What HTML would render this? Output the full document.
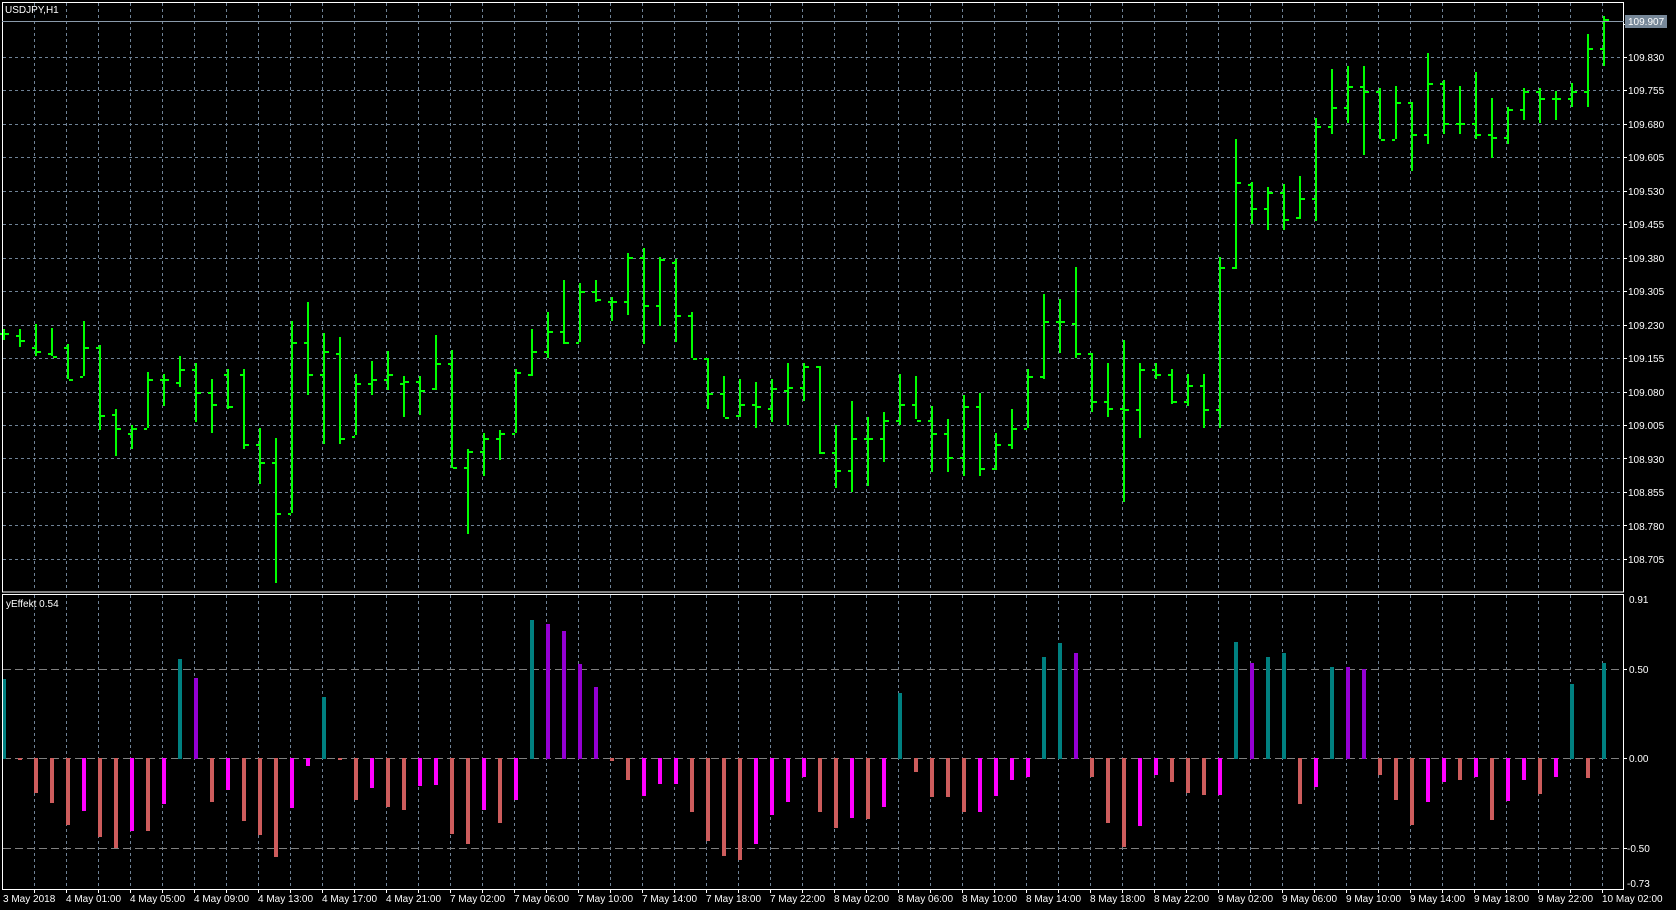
<!DOCTYPE html>
<html><head><meta charset="utf-8"><style>
html,body{margin:0;padding:0;background:#000;width:1676px;height:910px;overflow:hidden}
svg{display:block}
text{font-family:"Liberation Sans",sans-serif;font-size:10px;fill:#fff}
</style></head><body>
<svg id="s" width="1676" height="910" xmlns="http://www.w3.org/2000/svg">
<g id="grid"></g>
<g id="bars"></g>
<g id="ind"></g>
<rect x="2.5" y="2.5" width="1621" height="589.5" fill="none" stroke="#fff" stroke-width="1"/>
<rect x="2.5" y="594.5" width="1621" height="295" fill="none" stroke="#fff" stroke-width="1"/>
<line x1="2" y1="21.5" x2="1624" y2="21.5" stroke="#8a9aaa" stroke-width="1"/>
<rect x="1625" y="15" width="42" height="13" fill="#778899"/>
<text x="5" y="13">USDJPY,H1</text>
<text x="6" y="607">yEffekt 0.54</text>
<g id="plabels">
<text x="1628" y="25">109.907</text>
<text x="1628" y="61">109.830</text>
<text x="1628" y="94">109.755</text>
<text x="1628" y="128">109.680</text>
<text x="1628" y="161">109.605</text>
<text x="1628" y="195">109.530</text>
<text x="1628" y="228">109.455</text>
<text x="1628" y="262">109.380</text>
<text x="1628" y="295">109.305</text>
<text x="1628" y="329">109.230</text>
<text x="1628" y="362">109.155</text>
<text x="1628" y="396">109.080</text>
<text x="1628" y="429">109.005</text>
<text x="1628" y="463">108.930</text>
<text x="1628" y="496">108.855</text>
<text x="1628" y="530">108.780</text>
<text x="1628" y="563">108.705</text>
<text x="1629" y="603">0.91</text>
<text x="1629" y="673">0.50</text>
<text x="1629" y="762">0.00</text>
<text x="1627" y="852">-0.50</text>
<text x="1627" y="887">-0.73</text>
</g>
<g>
<text x="3" y="902">3 May 2018</text>
<text x="66" y="902">4 May 01:00</text>
<text x="130" y="902">4 May 05:00</text>
<text x="194" y="902">4 May 09:00</text>
<text x="258" y="902">4 May 13:00</text>
<text x="322" y="902">4 May 17:00</text>
<text x="386" y="902">4 May 21:00</text>
<text x="450" y="902">7 May 02:00</text>
<text x="514" y="902">7 May 06:00</text>
<text x="578" y="902">7 May 10:00</text>
<text x="642" y="902">7 May 14:00</text>
<text x="706" y="902">7 May 18:00</text>
<text x="770" y="902">7 May 22:00</text>
<text x="834" y="902">8 May 02:00</text>
<text x="898" y="902">8 May 06:00</text>
<text x="962" y="902">8 May 10:00</text>
<text x="1026" y="902">8 May 14:00</text>
<text x="1090" y="902">8 May 18:00</text>
<text x="1154" y="902">8 May 22:00</text>
<text x="1218" y="902">9 May 02:00</text>
<text x="1282" y="902">9 May 06:00</text>
<text x="1346" y="902">9 May 10:00</text>
<text x="1410" y="902">9 May 14:00</text>
<text x="1474" y="902">9 May 18:00</text>
<text x="1538" y="902">9 May 22:00</text>
<text x="1602" y="902">10 May 02:00</text>
</g>
</svg>
<script>
var NS="http://www.w3.org/2000/svg";
function el(p,t,a){var e=document.createElementNS(NS,t);for(var k in a)e.setAttribute(k,a[k]);p.appendChild(e);return e;}
var g=document.getElementById('grid');
for(var x=34;x<1623;x+=32){
 el(g,'line',{x1:x+.5,y1:3,x2:x+.5,y2:591,stroke:'#6f8296','stroke-dasharray':'3,3'});
 el(g,'line',{x1:x+.5,y1:595,x2:x+.5,y2:889,stroke:'#6f8296','stroke-dasharray':'3,3'});
 el(g,'line',{x1:x+.5,y1:889,x2:x+.5,y2:893,stroke:'#fff'});
}
for(var i=0;i<17;i++){var y=Math.round(57+(i-1)*33.45)+.5;
 if(i>0)el(g,'line',{x1:3,y1:y,x2:1623,y2:y,stroke:'#6f8296','stroke-dasharray':'3,3'});
 el(g,'line',{x1:1623,y1:y,x2:1627,y2:y,stroke:'#fff'});}
[669.5,758.5,848.5].forEach(function(y){el(g,'line',{x1:3,y1:y,x2:1623,y2:y,stroke:'#808080','stroke-dasharray':'8,4'});el(g,'line',{x1:1623,y1:y,x2:1627,y2:y,stroke:'#fff'});});
var d=[[308,318,312,312],[308,325,313,318],[303,333,325,328],[307,333,330,333],[322,355,325,355],[300,352,352,325],[323,402,325,388],[383,427,387,400],[398,420,405,400],[348,400,400,355],[350,380,355,355],[333,362,357,345],[340,395,345,367],[355,405,367,378],[345,383,350,380],[345,420,350,415],[400,453,415,432],[410,545,432,480],[300,480,480,320],[283,370,320,350],[312,415,350,328],[315,415,330,410],[350,407,408,358],[338,370,358,355],[328,365,355,350],[352,390,358,356],[352,388,356,365],[313,365,363,340],[327,438,340,437],[420,500,437,422],[405,445,422,410],[402,430,410,405],[345,405,405,348],[308,352,350,328],[292,335,328,310],[262,322,310,320],[265,320,320,272],[262,283,272,280],[278,300,282,282],[237,295,282,240],[232,322,240,285],[240,305,285,242],[242,320,245,295],[292,335,295,335],[335,383,335,368],[352,390,368,390],[355,390,388,378],[357,400,378,380],[355,395,382,363],[340,398,365,362],[340,375,362,342],[342,425,342,423],[398,457,423,440],[375,460,440,410],[390,455,410,410],[385,432,410,393],[350,398,393,378],[352,392,378,393],[380,442,393,405],[392,442,405,428],[370,445,428,380],[368,445,380,438],[405,440,438,415],[383,420,415,400],[345,400,400,352],[275,355,352,300],[280,330,300,300],[250,335,302,330],[330,385,330,375],[340,390,375,382],[318,470,382,383],[340,410,383,345],[340,355,345,350],[345,378,350,375],[350,380,375,360],[350,400,360,383],[240,400,383,250],[130,252,250,170],[170,210,172,195],[175,215,195,180],[172,215,180,205],[165,205,203,185],[110,207,185,118],[65,125,118,100],[62,115,100,80],[62,145,80,85],[82,130,85,130],[80,130,130,95],[95,160,95,125],[50,135,125,78],[75,125,78,115],[80,125,115,115],[67,130,115,125],[92,148,125,128],[100,135,128,102],[82,112,102,85],[82,115,85,92],[85,112,92,92],[78,100,92,85],[32,100,85,45],[15,62,45,18]];
var b=document.getElementById('bars');var k=1.0689;
d.forEach(function(r,i){var x=3+16*i;var H=Math.round(r[0]*k),L=Math.round(r[1]*k),O=Math.round(r[2]*k),C=Math.round(r[3]*k);
 el(b,'rect',{x:x,y:H,width:2,height:Math.max(2,L-H),fill:'#00ff00'});
 el(b,'rect',{x:x-3,y:O,width:3,height:2,fill:'#00ff00'});
 el(b,'rect',{x:x+2,y:C,width:4,height:2,fill:'#00ff00'});});
var T='#008080',V='#9400d3',R='#cd5c5c',M='#ff00ff';
var iv=[[679/k,T],[711,R],[793/k,R],[803/k,R],[825/k,R],[811/k,M],[837/k,R],[848/k,R],[831/k,M],[831/k,R],[804/k,M],[659/k,T],[678/k,V],[802/k,R],[790/k,M],[821/k,R],[835/k,R],[857/k,R],[808/k,M],[717,M],[652,T],[709,R],[748,R],[737,M],[755,R],[758,R],[735,M],[734,M],[780,R],[790,R],[758,M],[770,R],[748,M],[580,T],[584,V],[590,V],[621,V],[643,V],[712,R],[730,R],[745,M],[733,M],[733,M],[760,R],[787,R],[801,R],[805,R],[790,M],[762,M],[750,M],[727,M],[760,R],[775,R],[765,M],[766,R],[755,M],[648,T],[722,R],[746,R],[746,R],[760,R],[760,M],[745,M],[730,M],[727,M],[615,T],[602,T],[611,V],[727,R],[770,R],[792,R],[773,M],[725,M],[732,R],[742,R],[744,R],[744,M],[601,T],[620,V],[615,T],[611,T],[752,R],[736,M],[624,T],[624,V],[626,V],[725,R],[748,R],[772,R],[750,M],[732,M],[730,R],[727,M],[767,R],[749,M],[730,M],[743,R],[727,M],[640,T],[728,R],[620,T]];
var ig=document.getElementById('ind');
iv.forEach(function(r,i){var x=3+16*i-1;var y=Math.round(r[0]*k);var z=758;
 if(y<z)el(ig,'rect',{x:x,y:y,width:4,height:z-y+1,fill:r[1]});
 else el(ig,'rect',{x:x,y:z,width:4,height:Math.max(2,y-z),fill:r[1]});});
</script>
</body></html>
